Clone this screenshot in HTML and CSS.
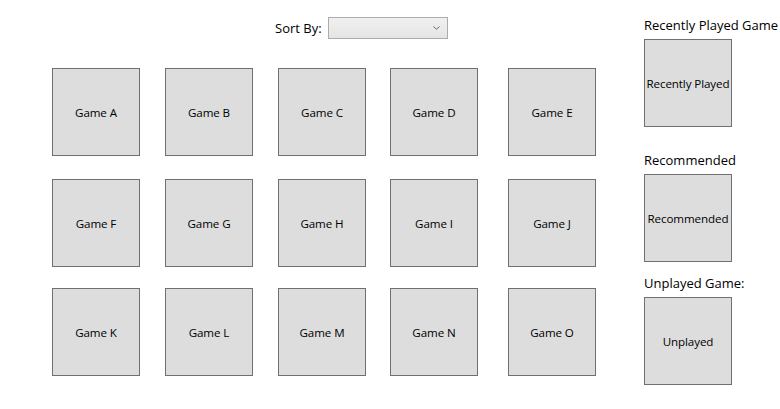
FILE: index.html
```html
<!DOCTYPE html>
<html>
<head>
<meta charset="utf-8">
<link rel="stylesheet" href="styles.css">
</head>
<body>
<div class="app">
  <div class="main">
    <div class="sortbar">
      <span class="sort-label">Sort By:</span>
      <div class="combo">
        <svg class="chev" width="7" height="4" viewBox="0 0 7 4"><path d="M0.5 0.5 L3.5 3.3 L6.5 0.5" fill="none" stroke="#666" stroke-width="1"/></svg>
      </div>
    </div>
    <div class="grid">
      <div class="tile">Game A</div>
      <div class="tile">Game B</div>
      <div class="tile">Game C</div>
      <div class="tile">Game D</div>
      <div class="tile">Game E</div>
      <div class="tile">Game F</div>
      <div class="tile">Game G</div>
      <div class="tile">Game H</div>
      <div class="tile">Game I</div>
      <div class="tile">Game J</div>
      <div class="tile">Game K</div>
      <div class="tile">Game L</div>
      <div class="tile">Game M</div>
      <div class="tile">Game N</div>
      <div class="tile">Game O</div>
    </div>
  </div>
  <div class="side">
    <div class="side-label first">Recently Played Game</div>
    <div class="tile">Recently Played</div>
    <div class="side-label second">Recommended</div>
    <div class="tile">Recommended</div>
    <div class="side-label third">Unplayed Game:</div>
    <div class="tile">Unplayed</div>
  </div>
</div>
</body>
</html>
```
FILE: styles.css
```css
html, body {
  margin: 0;
  padding: 0;
  background: #ffffff;
}
body {
  width: 780px;
  height: 409px;
  overflow: hidden;
  font-family: "Open Sans", "Noto Sans", sans-serif;
  color: #000;
}
.app {
  display: flex;
}
.main {
  width: 644px;
  flex: none;
  padding-top: 17px;
}
.sortbar {
  display: flex;
  align-items: center;
  padding-left: 275px;
  height: 22px;
}
.sort-label {
  font-size: 13px;
  line-height: 20px;
  width: 53px;
  white-space: nowrap;
}
.combo {
  box-sizing: border-box;
  width: 120px;
  height: 22px;
  border: 1px solid #acacac;
  background: linear-gradient(#f0f0f0, #e5e5e5);
  display: flex;
  align-items: center;
  justify-content: flex-end;
  padding-right: 7px;
}
.chev {
  display: block;
}
.grid {
  margin-top: 29px;
  padding-left: 52px;
  display: grid;
  grid-template-columns: 113px 113px 112px 118px 88px;
  grid-template-rows: 111px 109px 88px;
}
.tile {
  box-sizing: border-box;
  width: 88px;
  height: 88px;
  background: #dddddd;
  border: 1px solid #707070;
  display: flex;
  align-items: center;
  justify-content: center;
  font-size: 11.6px;
  letter-spacing: -0.1px;
  white-space: nowrap;
}
.side {
  flex: none;
  width: 136px;
  padding-top: 15px;
  display: flex;
  flex-direction: column;
}
.side-label {
  font-size: 13px;
  line-height: 20px;
  height: 20px;
  margin-bottom: 4px;
  white-space: nowrap;
}
.side-label.second {
  margin-top: 23px;
}
.side-label.third {
  margin-top: 11px;
}
```
